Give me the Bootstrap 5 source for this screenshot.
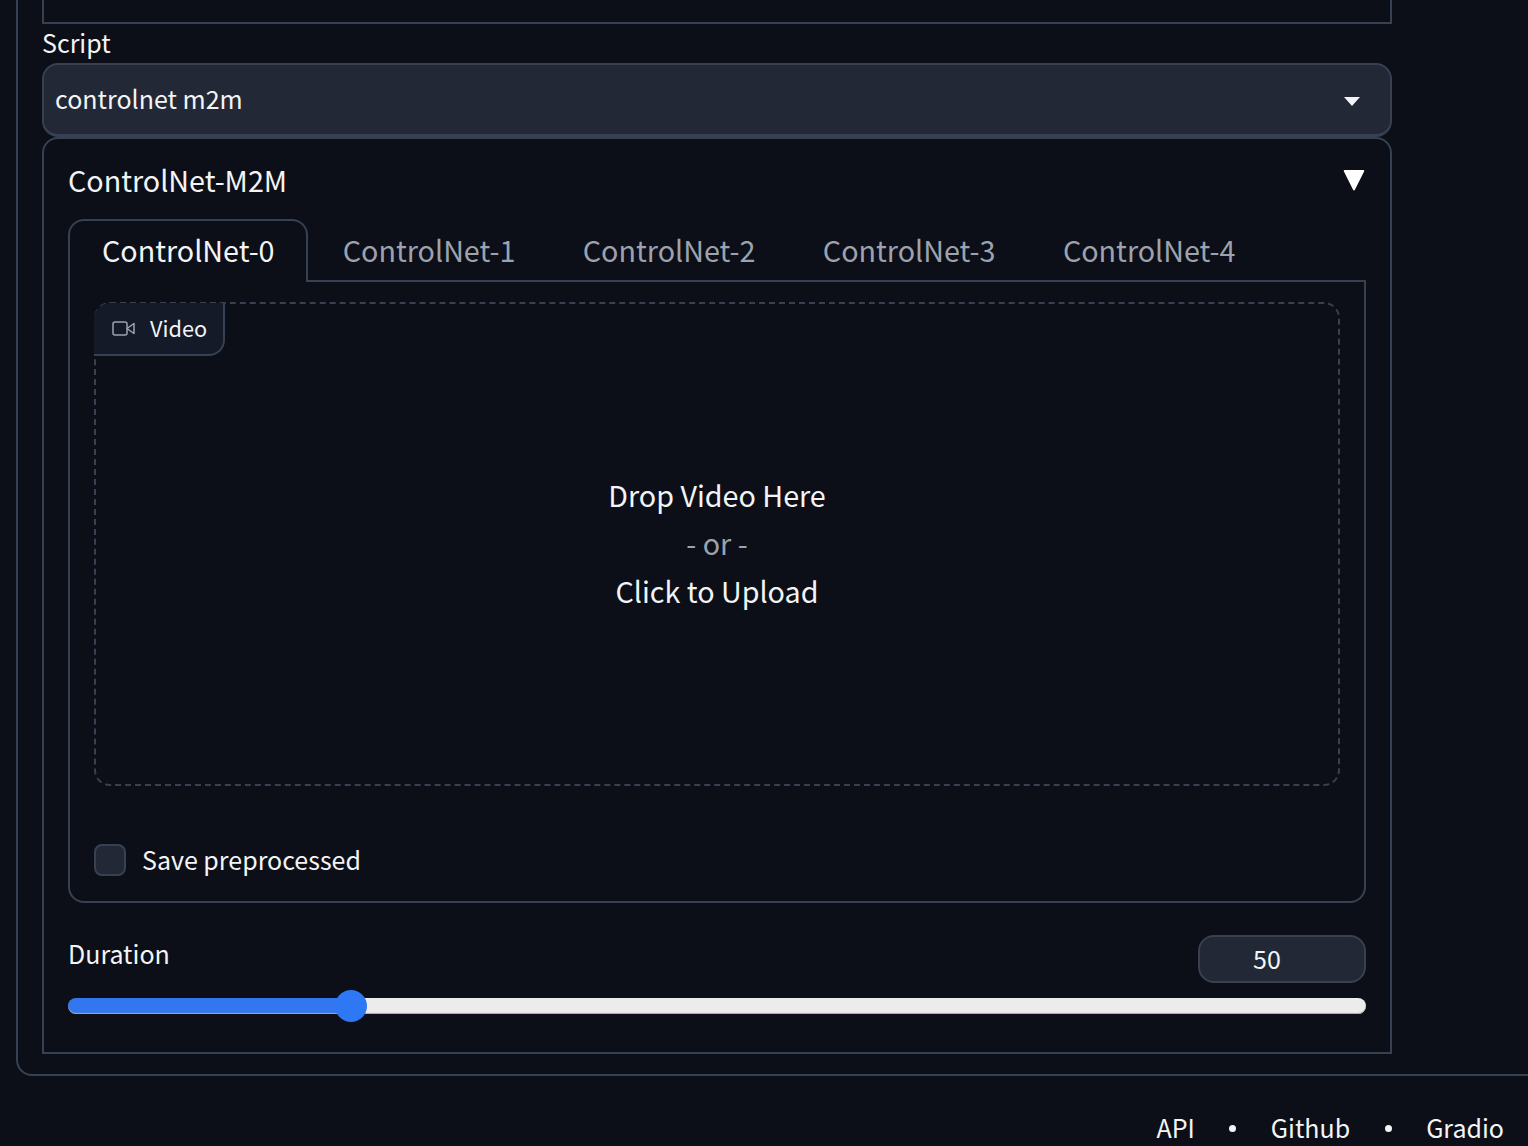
<!DOCTYPE html>
<html lang="en">
<head>
  <meta charset="UTF-8" />
  <meta name="viewport" content="width=device-width, initial-scale=1" />
  <title>ControlNet-M2M</title>
  <link href="https://cdn.jsdelivr.net/npm/bootstrap@5.3.0/dist/css/bootstrap.min.css" rel="stylesheet" />
  <style>
    html, body {
      background: #0c0f17;
      height: 1146px;
      overflow: hidden;
    }
    body {
      font-family: "Noto Sans CJK SC", "Noto Sans", sans-serif;
      color: #f3f4f6;
      font-size: 25px;
    }
    .shell {
      margin-left: 16px;
      height: 1076px;
      padding-left: 24px;
      border-left: 2px solid #374151;
      border-bottom: 2px solid #374151;
      border-bottom-left-radius: 16px;
    }
    .column {
      width: 1350px;
    }
    .prev-box {
      height: 24px;
      border: 2px solid #374151;
      border-top: 0;
    }
    .script-label {
      height: 39px;
      line-height: 36px;
    }
    .script-select {
      height: 74px;
      padding: 0 11px 2px;
      font-size: 25px;
      color: #f3f4f6;
      background-color: #222836;
      border: 2px solid #374151;
      border-bottom-width: 3px;
      border-radius: 16px;
      background-image: url("data:image/svg+xml,%3Csvg xmlns='http://www.w3.org/2000/svg' viewBox='0 0 16 10'%3E%3Cpath d='M0 0h16L8 9z' fill='%23f3f4f6'/%3E%3C/svg%3E");
      background-size: 16px 10px;
      background-position: right 30px top 32px;
    }
    .m2m-panel {
      height: 917px;
      padding: 0 24px;
      border: 2px solid #374151;
      border-top-left-radius: 16px;
      border-top-right-radius: 16px;
    }
    .panel-head {
      height: 80px;
      padding-top: 18px;
      font-size: 28.7px;
      line-height: 46px;
    }
    .tri {
      width: 22px;
      height: 22px;
      margin-top: 12px;
      margin-right: 1px;
    }
    .cn-tabs {
      --bs-nav-tabs-border-color: #374151;
      --bs-nav-tabs-border-width: 2px;
      --bs-nav-tabs-border-radius: 16px;
      --bs-nav-tabs-link-active-bg: #0c0f17;
      --bs-nav-tabs-link-active-color: #f3f4f6;
      --bs-nav-tabs-link-active-border-color: #374151;
      height: 63px;
    }
    .cn-tabs .nav-link {
      height: 63px;
      padding: 0 31.75px;
      font-size: 28.7px;
      line-height: 57px;
      color: #9ca3af;
    }
    .cn-tabs .nav-link.active {
      padding: 0 31.5px 0 32px;
      color: #f3f4f6;
      border-bottom: 0;
    }
    .cn-tabs .nav-item:nth-child(2) {
      margin-left: 1px;
    }
    .tab-body {
      height: 621px;
      padding: 20px 24px 0;
      border: 2px solid #374151;
      border-top: 0;
      border-bottom-left-radius: 16px;
      border-bottom-right-radius: 16px;
    }
    .drop-zone {
      height: 484px;
      border: 2px dashed #374151;
      border-radius: 16px;
    }
    .video-tag {
      top: -1px;
      left: -2px;
      width: 131px;
      height: 53px;
      padding-left: 18px;
      gap: 15px;
      font-size: 21.7px;
      background: #141a27;
      border: 2px solid #374151;
      border-top: 0;
      border-left: 0;
      border-top-left-radius: 16px;
      border-bottom-right-radius: 16px;
    }
    .drop-text {
      font-size: 28.7px;
      line-height: 48px;
      padding-bottom: 2px;
    }
    .or-text {
      color: #9ca3af;
    }
    .save-row {
      margin-top: 58px;
      gap: 16px;
    }
    .save-row .form-check-input {
      width: 32px;
      height: 32px;
      margin: 0;
      background-color: #222836;
      border: 2px solid #374151;
      border-radius: 8px;
    }
    .save-row label {
      line-height: 30px;
      height: 32px;
    }
    .duration-row {
      margin-top: 32px;
      height: 49px;
    }
    .duration-row label {
      line-height: 36px;
    }
    .number-box {
      width: 168px;
      height: 48px;
      padding: 0 30px 2px 0;
      text-align: center;
      font-size: 25px;
      color: #f3f4f6;
      background: #222836;
      border: 2px solid #374151;
      border-radius: 16px;
    }
    .number-box:focus {
      color: #f3f4f6;
      background: #222836;
    }
    .dur-range {
      display: block;
      height: 32px;
      margin-top: 6px;
    }
    .dur-range::-webkit-slider-runnable-track {
      height: 16px;
      border-radius: 8px;
      background: linear-gradient(to right, #3276f0 21.8%, #ececec 21.8%);
      box-shadow: inset 0 -1px 1px #a8a8a8;
    }
    .dur-range::-webkit-slider-thumb {
      width: 32px;
      height: 32px;
      margin-top: -8px;
      background: #2f78f5;
      border-radius: 50%;
    }
    .foot {
      height: 70px;
      padding: 31px 24px 0 0;
      font-size: 25px;
      line-height: 40px;
    }
    .foot a {
      color: #f3f4f6;
      text-decoration: none;
    }
    .foot-dot {
      width: 7px;
      height: 7px;
      margin: 3px 34.5px 0;
      border-radius: 50%;
      background: #f3f4f6;
    }
  </style>
</head>
<body>

<div class="shell">
  <div class="column">
    <div class="prev-box"></div>

    <div class="script-label">Script</div>
    <select class="form-select script-select" aria-label="Script">
      <option selected>controlnet m2m</option>
    </select>

    <!-- ControlNet accordion -->
    <section class="m2m-panel">
      <div class="panel-head d-flex justify-content-between">
        <span>ControlNet-M2M</span>
        <svg class="tri" viewBox="0 0 22 22"><path d="M1.5 1h19a.8.8 0 0 1 .7 1.2L11.8 21a.9.9 0 0 1-1.6 0L.8 2.200A.8.8 0 0 1 1.500 1z" fill="#fff"/></svg>
      </div>

      <ul class="nav nav-tabs cn-tabs">
        <li class="nav-item"><a class="nav-link active" href="#">ControlNet-0</a></li>
        <li class="nav-item"><a class="nav-link" href="#">ControlNet-1</a></li>
        <li class="nav-item"><a class="nav-link" href="#">ControlNet-2</a></li>
        <li class="nav-item"><a class="nav-link" href="#">ControlNet-3</a></li>
        <li class="nav-item"><a class="nav-link" href="#">ControlNet-4</a></li>
      </ul>

      <div class="tab-body">
        <div class="drop-zone position-relative d-flex flex-column justify-content-center align-items-center text-center">
          <div class="video-tag position-absolute d-flex align-items-center">
            <svg width="23" height="15" viewBox="0 0 23 15" fill="none" stroke="#9ca3af" stroke-width="1.500" stroke-linejoin="round"><rect x="1" y="1" width="14" height="13" rx="2"/><path d="M22 2.500v10l-7-5z"/></svg>
            <span>Video</span>
          </div>
          <div class="drop-text">
            <div>Drop Video Here</div>
            <div class="or-text">- or -</div>
            <div>Click to Upload</div>
          </div>
        </div>

        <div class="save-row d-flex align-items-center">
          <input class="form-check-input" type="checkbox" id="savePre" />
          <label for="savePre">Save preprocessed</label>
        </div>
      </div>

      <div class="duration-row d-flex justify-content-between">
        <label for="durRange">Duration</label>
        <input class="form-control number-box" type="text" value="50" aria-label="Duration value" />
      </div>
      <input class="form-range dur-range" id="durRange" type="range" min="0" max="237" value="50" />
    </section>
  </div>
</div>

<footer class="foot d-flex justify-content-end align-items-start">
  <a href="#">API</a>
  <span class="foot-dot align-self-center"></span>
  <a href="#">Github</a>
  <span class="foot-dot align-self-center"></span>
  <a href="#">Gradio</a>
</footer>

<script src="https://cdn.jsdelivr.net/npm/bootstrap@5.3.0/dist/js/bootstrap.bundle.min.js"></script>
</body>
</html>
